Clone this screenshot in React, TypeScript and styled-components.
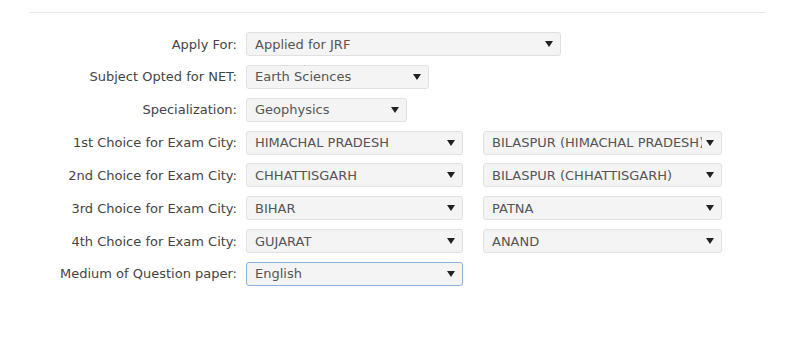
import React from 'react';
import styled, { createGlobalStyle } from 'styled-components';

const GlobalStyle = createGlobalStyle`
  html, body {
    margin: 0;
    padding: 0;
    background: #fff;
  }
  body {
    font-family: 'DejaVu Sans', Verdana, sans-serif;
    font-size: 13px;
    color: #444;
  }
`;

const Page = styled.div`
  padding: 12px 30px 0 30px;
  width: 736px;
`;

const Divider = styled.div`
  height: 1px;
  background: #e8e8e8;
  margin-bottom: 19px;
`;

const Form = styled.div`
  display: flex;
  flex-direction: column;
  gap: 8.85px;
`;

const Row = styled.div`
  display: flex;
  align-items: center;
`;

const Label = styled.label`
  width: 207px;
  padding-right: 9px;
  text-align: right;
  color: #444;
  white-space: nowrap;
`;

const SelectBox = styled.div<{ $width: number; $focused?: boolean }>`
  box-sizing: border-box;
  width: ${(p) => p.$width}px;
  height: 24px;
  display: flex;
  align-items: center;
  justify-content: space-between;
  padding: 0 7px 0 8px;
  background: #f4f4f4;
  border: 1px solid ${(p) => (p.$focused ? '#8eb2dc' : '#e0e0e0')};
  border-radius: 3px;
  color: #555;
  & + & {
    margin-left: 20px;
  }
`;

const SelectText = styled.span`
  overflow: hidden;
  white-space: nowrap;
  flex: 1;
`;

const Arrow = styled.span`
  width: 0;
  height: 0;
  border-left: 4px solid transparent;
  border-right: 4px solid transparent;
  border-top: 6px solid #222;
  margin-left: 4px;
  flex-shrink: 0;
`;

interface SelectProps {
  value: string;
  width: number;
  focused?: boolean;
}

const Select: React.FC<SelectProps> = ({ value, width, focused }) => (
  <SelectBox $width={width} $focused={focused}>
    <SelectText>{value}</SelectText>
    <Arrow />
  </SelectBox>
);

const rows: { label: string; selects: SelectProps[] }[] = [
  { label: 'Apply For:', selects: [{ value: 'Applied for JRF', width: 315 }] },
  { label: 'Subject Opted for NET:', selects: [{ value: 'Earth Sciences', width: 183 }] },
  { label: 'Specialization:', selects: [{ value: 'Geophysics', width: 161 }] },
  {
    label: '1st Choice for Exam City:',
    selects: [
      { value: 'HIMACHAL PRADESH', width: 217 },
      { value: 'BILASPUR (HIMACHAL PRADESH)', width: 239 },
    ],
  },
  {
    label: '2nd Choice for Exam City:',
    selects: [
      { value: 'CHHATTISGARH', width: 217 },
      { value: 'BILASPUR (CHHATTISGARH)', width: 239 },
    ],
  },
  {
    label: '3rd Choice for Exam City:',
    selects: [
      { value: 'BIHAR', width: 217 },
      { value: 'PATNA', width: 239 },
    ],
  },
  {
    label: '4th Choice for Exam City:',
    selects: [
      { value: 'GUJARAT', width: 217 },
      { value: 'ANAND', width: 239 },
    ],
  },
  {
    label: 'Medium of Question paper:',
    selects: [{ value: 'English', width: 217, focused: true }],
  },
];

const App: React.FC = () => (
  <>
    <GlobalStyle />
    <Page>
      <Divider />
      <Form>
        {rows.map((row) => (
          <Row key={row.label}>
            <Label>{row.label}</Label>
            {row.selects.map((s) => (
              <Select key={s.value} {...s} />
            ))}
          </Row>
        ))}
      </Form>
    </Page>
  </>
);

export default App;
